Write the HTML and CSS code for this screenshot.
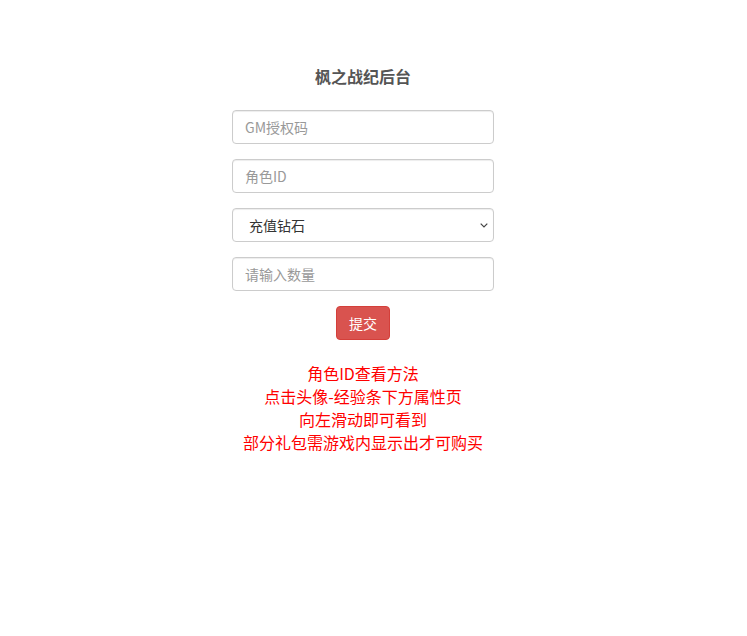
FILE: index.html
```html
<!DOCTYPE html>
<html lang="zh-CN">
<head>
<meta charset="utf-8">
<title>枫之战纪后台</title>
<link rel="stylesheet" href="styles.css">
</head>
<body>
<main class="page">
  <h1 class="title">枫之战纪后台</h1>
  <form class="form">
    <input class="field" type="text" placeholder="GM授权码">
    <input class="field" type="text" placeholder="角色ID">
    <div class="select-wrap">
      <select class="field select">
        <option>充值钻石</option>
      </select>
      <svg class="chev" width="8" height="5" viewBox="0 0 8 5"><path d="M0.7 0.7l3.3 3.3 3.3-3.3" fill="none" stroke="#444" stroke-width="1.2"/></svg>
    </div>
    <input class="field" type="text" placeholder="请输入数量">
    <button class="btn" type="button">提交</button>
  </form>
  <div class="notes">
    <p>角色ID查看方法</p>
    <p>点击头像-经验条下方属性页</p>
    <p>向左滑动即可看到</p>
    <p>部分礼包需游戏内显示出才可购买</p>
  </div>
</main>
</body>
</html>
```
FILE: styles.css
```css
html, body {
  margin: 0;
  padding: 0;
  background: #fff;
}
body {
  font-family: "Noto Sans CJK SC", "Noto Sans", sans-serif;
  color: #333;
}
.page {
  width: 726px;
  display: flex;
  flex-direction: column;
  align-items: center;
  padding-top: 66px;
}
.title {
  margin: 0;
  font-size: 16px;
  line-height: 20px;
  font-weight: bold;
  color: #555;
}
.form {
  margin-top: 24px;
  width: 262px;
  display: flex;
  flex-direction: column;
  align-items: center;
  gap: 15px;
}
.field {
  box-sizing: border-box;
  width: 262px;
  height: 34px;
  margin: 0;
  padding: 0 12px 1px;
  border: 1px solid #ccc;
  border-radius: 4px;
  font-family: inherit;
  font-size: 14px;
  color: #555;
  background: #fff;
  box-shadow: inset 0 1px 1px rgba(0,0,0,0.075);
  outline: none;
}
.field::placeholder {
  color: #999;
}
.select-wrap {
  position: relative;
  width: 262px;
}
.select {
  appearance: none;
  -webkit-appearance: none;
  padding-left: 16px;
  color: #333;
}
.chev {
  position: absolute;
  right: 6px;
  top: 15px;
  pointer-events: none;
}
.btn {
  width: 54px;
  height: 34px;
  padding: 0 0 1px;
  border: 1px solid #d43f3a;
  border-radius: 4px;
  background: #d9534f;
  color: #fff;
  font-family: inherit;
  font-size: 14px;
}
.notes {
  margin-top: 22px;
  text-align: center;
  color: #ff0000;
  font-size: 16px;
  line-height: 22.85px;
}
.notes p {
  margin: 0;
}
```
